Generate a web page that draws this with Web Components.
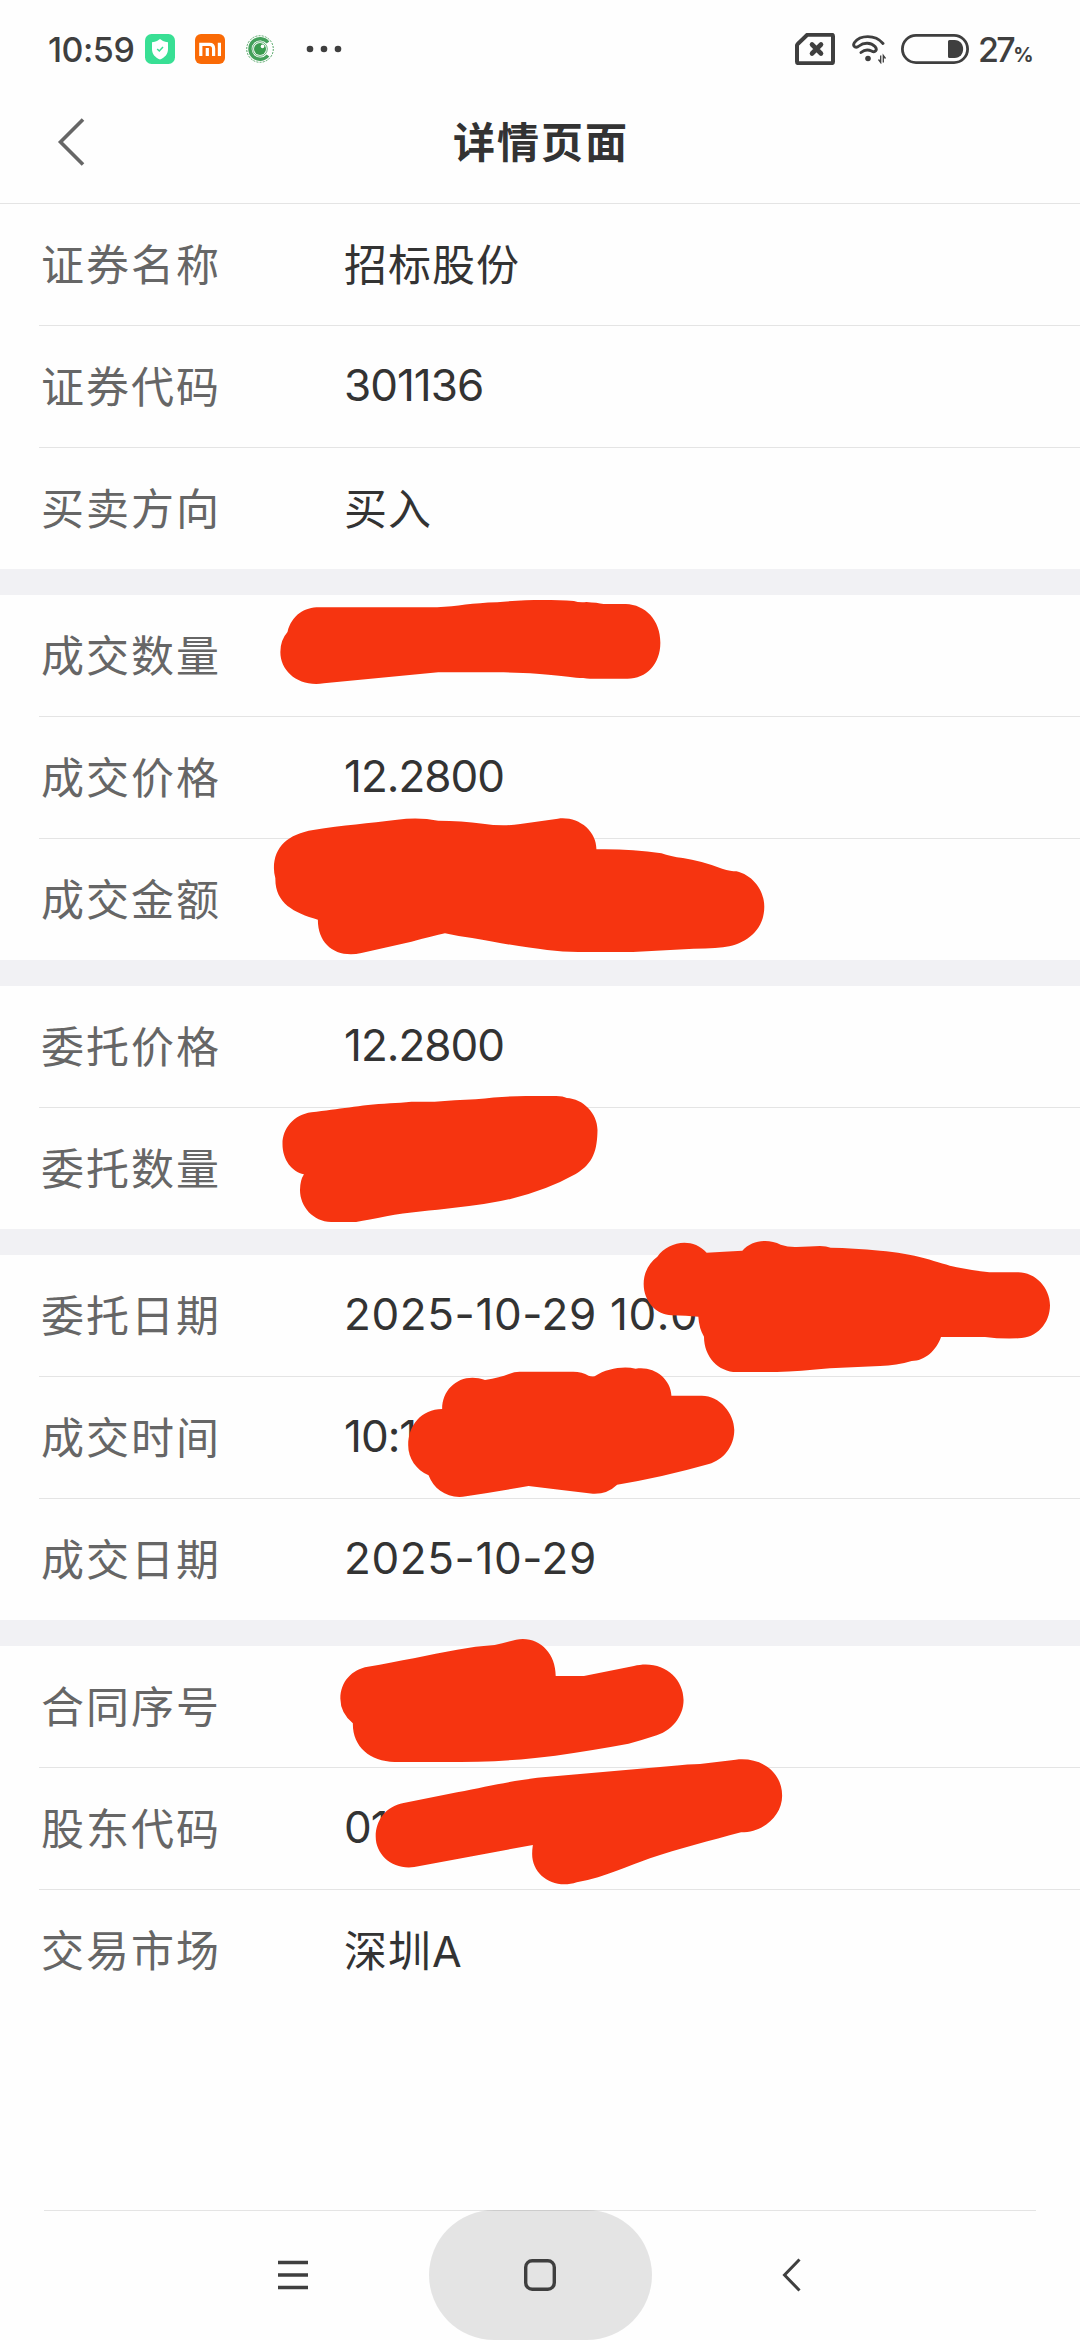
<!DOCTYPE html>
<html lang="zh-CN">
<head>
<meta charset="utf-8">
<meta name="viewport" content="width=device-width">
<title>详情页面</title>
<style>
	body {
		margin: 0;
		background: #fefefe;
		font-family: Inter, "Noto Sans CJK SC", sans-serif;
		color: #333;
	}
</style>
</head>
<body>
<detail-page>
	<status-bar slot="top" time="10:59" battery="27"></status-bar>
	<title-bar slot="top">详情页面</title-bar>

	<detail-group>
		<detail-row label="证券名称">招标股份</detail-row>
		<detail-row label="证券代码" class="number code">301136</detail-row>
		<detail-row label="买卖方向">买入</detail-row>
	</detail-group>
	<detail-group>
		<detail-row label="成交数量"></detail-row>
		<detail-row label="成交价格" class="number">12.2800</detail-row>
		<detail-row label="成交金额"></detail-row>
	</detail-group>
	<detail-group>
		<detail-row label="委托价格" class="number">12.2800</detail-row>
		<detail-row label="委托数量"></detail-row>
	</detail-group>
	<detail-group>
		<detail-row label="委托日期" class="number date">2025-10-29 10:0</detail-row>
		<detail-row label="成交时间" class="number">10:1</detail-row>
		<detail-row label="成交日期" class="number date">2025-10-29</detail-row>
	</detail-group>
	<detail-group>
		<detail-row label="合同序号"></detail-row>
		<detail-row label="股东代码" class="number">01</detail-row>
		<detail-row label="交易市场">深圳A</detail-row>
	</detail-group>

	<nav-bar slot="bottom"></nav-bar>
	<marker-layer slot="over"></marker-layer>
</detail-page>

<script>
class DetailPage extends HTMLElement {
	constructor() {
		super();
		this.attachShadow({ mode: "open" });
		this.shadowRoot.innerHTML = `
			<style>
				:host {
					display: flex;
					flex-direction: column;
					position: relative;
					height: 2340px;
					width: 1080px;
					overflow: hidden;
				}
				main {
					flex: 1;
					display: flex;
					flex-direction: column;
					gap: 26px;
				}
			</style>
			<slot name="top"></slot>
			<main><slot></slot></main>
			<slot name="bottom"></slot>
			<slot name="over"></slot>
		`;
	}
}

class StatusBar extends HTMLElement {
	constructor() {
		super();
		this.attachShadow({ mode: "open" });
		this.shadowRoot.innerHTML = `
			<style>
				:host {
					display: flex;
					justify-content: space-between;
					align-items: center;
					box-sizing: border-box;
					height: 98px;
					padding: 0 47px 0 48px;
					color: #3f3f3f;
				}
				div {
					display: flex;
					align-items: center;
				}
				svg { display: block; flex: none; }
				#time {
					width: 95px;
					font-size: 34px;
					font-weight: 500;
					letter-spacing: -.5px;
					white-space: nowrap;
				}
				#level {
					display: flex;
					align-items: baseline;
					justify-content: space-between;
					width: 55px;
					margin-left: 9px;
					font-size: 34px;
					font-weight: 500;
					letter-spacing: -2.6px;
					white-space: nowrap;
				}
				#level small {
					font-size: 20px;
					font-weight: 700;
					letter-spacing: 0;
				}
				#shield { margin-left: 2px; }
				#mi { margin-left: 20px; }
				#eye { margin-left: 20px; }
				#more { margin-left: 30px; }
				#wifi { margin-left: 16px; }
				#battery { margin-left: 14px; }
			</style>
			<div>
				<span id="time"></span>
				<svg id="shield" width="30" height="30" viewBox="0 0 30 30">
					<rect width="30" height="30" rx="6.5" fill="#38df94"/>
					<path d="M15 5 L18 7 Q20 8 23 8.2 V15 C23 20 20 23.500 15 25.500 C10 23.500 7 20 7 15 V8.200 Q10 8 12 7Z" fill="#fff"/>
					<path d="M12.200 15 L14.300 17 L18 13" fill="none" stroke="#38df94" stroke-width="1.500"/>
				</svg>
				<svg id="mi" width="30" height="30" viewBox="0 0 30 30">
					<rect width="30" height="30" rx="6" fill="#fa6a06"/>
					<path d="M5.800 22 V10.300 H14.500 Q18.600 10.300 18.600 14.400 V22 M12.300 14 V22 M24.400 8.800 V22" fill="none" stroke="#fff" stroke-width="3.200"/>
				</svg>
				<svg id="eye" width="30" height="30" viewBox="0 0 30 30">
					<circle cx="15" cy="15" r="13.300" fill="none" stroke="#57a869" stroke-width="1" stroke-dasharray="2 1.200"/>
					<path d="M23 8.500 A10.200 10.200 0 1 0 23 21.500" fill="none" stroke="#43a05a" stroke-width="3.400"/>
					<circle cx="15" cy="15" r="7.300" fill="none" stroke="#43a05a" stroke-width=".8"/>
					<circle cx="15" cy="15" r="6" fill="#3a9c4f"/>
					<circle cx="17.500" cy="12.400" r="1.800" fill="#fff"/>
				</svg>
				<svg id="more" width="40" height="10" viewBox="0 0 40 10" fill="#3f3f3f">
					<circle cx="5" cy="5" r="3.300"/><circle cx="19" cy="5" r="3.300"/><circle cx="33" cy="5" r="3.300"/>
				</svg>
			</div>
			<div>
				<svg width="40" height="32" viewBox="0 0 40 32" fill="none" stroke="#3f3f3f">
					<path d="M13 2.500 H36.500 Q38 2.500 38 4 V29.500 Q38 31 36.500 31 H3.500 Q2 31 2 29.500 V13 Q2 12.400 2.500 12 L11.800 3 Q12.300 2.500 13 2.500Z" stroke-width="4" transform="translate(0 -.8)"/>
					<path d="M17 11.500 L26 20.500 M26 11.500 L17 20.500" stroke-width="4.600" stroke-linecap="round"/>
				</svg>
				<svg id="wifi" width="36" height="30" viewBox="0 0 36 30" fill="none" stroke="#3f3f3f">
					<path d="M32 9.500 C24 0 9 1 3.500 8.500 C1 12.500 5 14.500 8 12 C13 8 20 8.500 24 12.500 C27 16 24 19 20.500 17 C16 15 13 16 10 18.500" stroke-width="2.900" stroke-linecap="round"/>
					<circle cx="17" cy="24.500" r="2.800" fill="#3f3f3f" stroke="none"/>
					<path d="M29.700 21.500 V28.500 L27.500 25.500 M32.300 28.500 V21.500 L34.500 24.500" stroke-width="1.300"/>
				</svg>
				<svg id="battery" width="68" height="30" viewBox="0 0 68 30">
					<rect x="1.400" y="1.400" width="65.200" height="27.200" rx="13.600" fill="none" stroke="#3f3f3f" stroke-width="2.800"/>
					<path d="M48.500 6 H53.500 C65 6 65 24 53.500 24 H48.500 Q47 24 47 22.500 V7.500 Q47 6 48.500 6Z" fill="#3f3f3f"/>
				</svg>
				<span id="level"><span></span><small>%</small></span>
			</div>
		`;
	}

	connectedCallback() {
		this.shadowRoot.querySelector("#time").textContent = this.getAttribute("time");
		this.shadowRoot.querySelector("#level span").textContent = this.getAttribute("battery");
	}
}

class TitleBar extends HTMLElement {
	constructor() {
		super();
		this.attachShadow({ mode: "open" });
		this.shadowRoot.innerHTML = `
			<style>
				:host {
					display: grid;
					grid-template-columns: 120px 1fr 120px;
					align-items: center;
					box-sizing: border-box;
					height: 106px;
					padding-bottom: 18px;
					border-bottom: 1px solid #e4e4e4;
				}
				svg { margin-left: 56px; }
				h1 {
					margin: 2px 0 0;
					text-align: center;
					font-size: 42px;
					line-height: 60px;
					font-weight: 700;
					letter-spacing: 2px;
					text-indent: 2px;
				}
			</style>
			<svg width="30" height="50" viewBox="0 0 30 50">
				<path d="M27 2.500 L4.500 25 L27 47.500" fill="none" stroke="#666" stroke-width="3.600"/>
			</svg>
			<h1><slot></slot></h1>
		`;
	}
}

class DetailGroup extends HTMLElement {
	constructor() {
		super();
		this.attachShadow({ mode: "open" });
		this.shadowRoot.innerHTML = `
			<style>
				:host {
					display: flex;
					flex-direction: column;
					gap: 1px;
				}
				/* grey band between two groups */
				:host(:not(:last-of-type)) {
					box-shadow: 0 26px 0 #f1f1f4;
				}
				::slotted(:not(:last-child)) {
					box-shadow: 39px 1px 0 #e4e4e4;
					clip-path: inset(0 0 -1px 0);
				}
			</style>
			<slot></slot>
		`;
	}
}

class DetailRow extends HTMLElement {
	constructor() {
		super();
		this.attachShadow({ mode: "open" });
		this.shadowRoot.innerHTML = `
			<style>
				:host {
					display: grid;
					grid-template-columns: 303px 1fr;
					align-items: center;
					height: 121px;
					padding-left: 41px;
					font-size: 43px;
					line-height: 60px;
					white-space: nowrap;
				}
				#label {
					color: #666;
					letter-spacing: 2px;
				}
				#value { letter-spacing: 1px; }
				:host(.number) #value {
					margin-bottom: 3px;
					font-size: 44px;
					letter-spacing: -1px;
				}
				:host(.date) #value { letter-spacing: .6px; }
			</style>
			<span id="label"></span>
			<span id="value"><slot></slot></span>
		`;
	}

	connectedCallback() {
		this.shadowRoot.querySelector("#label").textContent = this.getAttribute("label");
	}
}

class NavBar extends HTMLElement {
	constructor() {
		super();
		this.attachShadow({ mode: "open" });
		this.shadowRoot.innerHTML = `
			<style>
				:host {
					display: flex;
					justify-content: center;
					gap: 26px;
					height: 130px;
					background: linear-gradient(#e4e4e4, #e4e4e4) center top / 992px 1px no-repeat;
				}
				button {
					display: flex;
					align-items: center;
					justify-content: center;
					width: 223px;
					padding: 0;
					border: 0;
					border-radius: 65px;
					background: none;
				}
				#home { background: rgba(0, 0, 0, 0.1); }
				svg { fill: none; stroke: #3f3f3f; stroke-width: 3.4; }
			</style>
			<button>
				<svg width="40" height="40"><path d="M7 7.500 H37 M7 20 H37 M7 32.500 H37"/></svg>
			</button>
			<button id="home">
				<svg width="40" height="40"><rect x="5.700" y="5.700" width="28.600" height="28.600" rx="6.500"/></svg>
			</button>
			<button>
				<svg width="40" height="40"><path d="M30.500 4.500 L15.500 20 L30.500 35.500" stroke-width="3"/></svg>
			</button>
		`;
	}
}

// freehand marker strokes lying over the private values
class MarkerLayer extends HTMLElement {
	constructor() {
		super();
		this.attachShadow({ mode: "open" });
		this.shadowRoot.innerHTML = `
			<style>
				:host {
					display: block;
					position: absolute;
					inset: 0;
					pointer-events: none;
				}
				svg { display: block; fill: #f63410; }
			</style>
			<svg width="1080" height="2340" viewBox="0 0 1080 2340">
				<g transform="translate(240 560) scale(.35714 .33333)">
					<path d="M222 142 H552 C610 139 650 129 720 127 C790 119 870 119 935 123 Q948 128 970 126 Q1000 128 1018 132 H1080 C1135 134 1177 180 1177 248 C1177 312 1138 356 1085 356 H980 C930 355 860 337 720 337 H555 L235 370 C165 382 113 335 113 276 Q113 240 133 216 C145 165 180 142 222 142Z"/>
					<path d="M95 925 C95 860 135 822 205 810 C290 794 360 791 440 779 Q500 770 555 782 Q620 782 680 791 Q735 800 785 792 L890 776 C945 768 998 810 998 868 Q1090 866 1180 880 Q1205 890 1240 894 Q1290 902 1350 926 Q1375 934 1390 934 C1435 945 1468 990 1468 1040 C1468 1105 1425 1145 1370 1159 Q1340 1166 1270 1166 L1100 1176 H960 Q910 1177 860 1170 Q780 1160 650 1134 Q610 1129 574 1120 Q540 1128 480 1145 L340 1179 C270 1195 218 1155 218 1079 C150 1058 98 1030 99 955 Q95 940 95 925Z"/>
				</g>
				<g transform="translate(240 960) scale(.35714 .33333)">
					<path d="M119 552 C119 505 150 465 200 457 C280 448 330 436 420 430 Q450 428 480 425 H545 Q600 421 660 418 Q740 408 800 408 H885 Q905 408 915 414 C960 416 1001 460 1001 510 C1000 570 990 610 940 642 Q860 690 760 716 Q700 732 600 743 C540 752 470 755 410 769 Q360 780 325 786 H255 C205 785 168 740 168 690 Q168 662 179 643 C145 635 119 600 119 552Z"/>
				</g>
				<g transform="translate(580 1220) scale(.33333)">
					<path d="M191 192 C191 160 205 130 232 110 C265 65 335 50 380 98 Q430 95 487 92 C515 60 565 55 602 74 Q625 82 650 81 Q690 80 720 78 Q740 78 752 83 Q820 84 900 92 C1000 98 1080 130 1130 142 Q1180 152 1228 157 H1315 C1365 157 1410 203 1410 256 C1410 310 1370 355 1315 355 Q1260 357 1215 351 H1083 C1070 390 1035 423 995 423 Q950 437 900 438 L750 445 Q660 454 590 456 H470 C415 456 372 410 372 350 Q357 325 355 290 Q320 287 275 286 C230 285 191 245 191 192Z"/>
				</g>
				<g transform="translate(300 1220) scale(.35714 .33333)">
					<path d="M303 676 C303 615 340 568 398 567 C398 500 455 455 518 480 Q560 473 585 462 Q600 455 615 455 H765 Q790 455 808 467 Q815 470 825 469 C860 445 905 438 940 446 C990 437 1038 475 1040 527 H1125 C1175 527 1216 580 1216 630 C1216 680 1185 720 1145 732 Q1010 773 888 794 Q860 823 820 821 Q730 810 640 798 Q560 813 465 829 C415 838 375 810 360 766 C325 750 303 715 303 676Z"/>
				</g>
				<g transform="translate(300 1600) scale(.35714 .33333)">
					<path d="M113 296 C113 245 145 208 190 200 C280 184 360 164 440 149 Q490 139 545 135 Q575 128 605 119 C665 106 716 155 716 228 H795 L935 198 C1010 177 1074 230 1074 300 C1074 350 1040 395 990 409 Q960 420 920 431 Q830 449 715 467 Q640 477 545 484 Q500 486 450 486 H265 C195 484 147 440 148 370 Q113 338 113 296Z"/>
					<path d="M212 710 C212 660 240 620 290 609 L440 577 C530 558 590 542 680 532 Q720 528 760 524 L1040 498 Q1090 492 1120 492 L1220 479 C1290 470 1350 515 1350 587 C1350 645 1300 697 1235 697 C1150 722 1060 746 980 775 C920 797 860 830 775 847 C710 870 650 825 650 762 Q650 750 652 735 L320 801 C260 810 212 765 212 710Z"/>
				</g>
			</svg>
		`;
	}
}

customElements.define("detail-page", DetailPage);
customElements.define("status-bar", StatusBar);
customElements.define("title-bar", TitleBar);
customElements.define("detail-group", DetailGroup);
customElements.define("detail-row", DetailRow);
customElements.define("nav-bar", NavBar);
customElements.define("marker-layer", MarkerLayer);
</script>
</body>
</html>
